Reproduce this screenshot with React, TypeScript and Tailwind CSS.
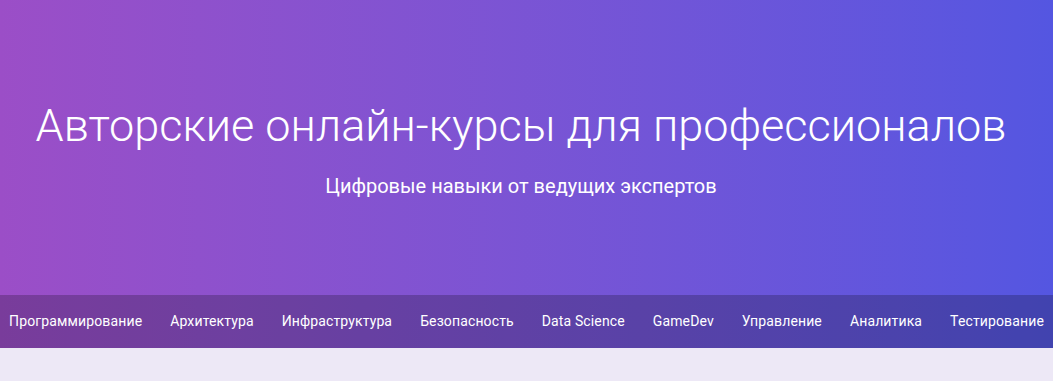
import React from 'react';

const categories = [
  'Программирование',
  'Архитектура',
  'Инфраструктура',
  'Безопасность',
  'Data Science',
  'GameDev',
  'Управление',
  'Аналитика',
  'Тестирование',
];

const App = () => {
  return (
    <div className="min-h-screen bg-[#ede8f6] font-['Roboto',sans-serif]">
      {/* hero + category bar share one gradient */}
      <div className="bg-gradient-to-r from-[#9b4ec7] to-[#5456e1] text-white">
        <div className="h-[295px] flex flex-col items-center justify-center pr-[11px] pt-[4px]">
          <h1 className="text-[45px] font-light leading-tight">
            Авторские онлайн-курсы для профессионалов
          </h1>
          <p className="mt-[16px] text-[20px]">Цифровые навыки от ведущих экспертов</p>
        </div>
        <nav className="h-[53px] bg-black/[0.22] flex items-center justify-center gap-7 text-[14px] tracking-[0.13px]">
          {categories.map((c) => (
            <a key={c} href="#" className="whitespace-nowrap hover:underline">
              {c}
            </a>
          ))}
        </nav>
      </div>
    </div>
  );
};

export default App;
